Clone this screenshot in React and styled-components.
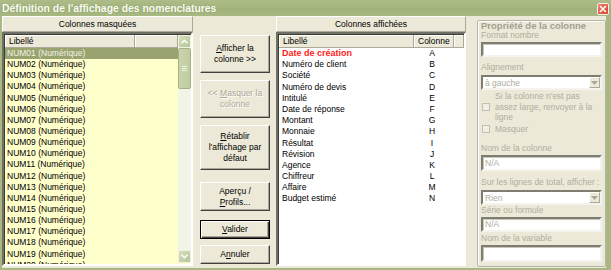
import React from 'react';
import styled, { createGlobalStyle } from 'styled-components';

const GlobalStyle = createGlobalStyle`
  html, body {
    margin: 0;
    padding: 0;
    background: #ece9d8;
    overflow: hidden;
  }
  body {
    font-family: 'Liberation Sans', Arial, sans-serif;
    font-size: 8.5px;
    color: #000;
  }
  * { box-sizing: border-box; }
`;

const hiddenCols = Array.from(
  { length: 20 },
  (_, i) => `NUM${String(i + 1).padStart(2, '0')} (Numérique)`
);

const shownCols = [
  ['Date de création', 'A'],
  ['Numéro de client', 'B'],
  ['Société', 'C'],
  ['Numéro de devis', 'D'],
  ['Intitulé', 'E'],
  ['Date de réponse', 'F'],
  ['Montant', 'G'],
  ['Monnaie', 'H'],
  ['Résultat', 'I'],
  ['Révision', 'J'],
  ['Agence', 'K'],
  ['Chiffreur', 'L'],
  ['Affaire', 'M'],
  ['Budget estimé', 'N'],
];

export default function App() {
  return (
    <>
      <GlobalStyle />
      <Window>
        <TitleBar>
          <span>Définition de l'affichage des nomenclatures</span>
          <CloseBox>
            <svg width='8' height='8' viewBox='0 0 8 8'>
              <path d='M1 1L7 7M7 1L1 7' stroke='#fff' strokeWidth='1.6' />
            </svg>
          </CloseBox>
        </TitleBar>

        <Frame>
          {/* Colonnes masquées */}
          <Pane $w={191} $ml={0}>
            <PaneHeader>Colonnes masquées</PaneHeader>
            <ListBox $bg='#ffffcc'>
              <ListContent>
                <HeaderRow>
                  <HeaderCell $w={130}>Libellé</HeaderCell>
                  <HeaderCell $grow>&nbsp;</HeaderCell>
                </HeaderRow>
                {hiddenCols.map((name, i) => (
                  <Row key={name} $selected={i === 0}>
                    {name}
                  </Row>
                ))}
              </ListContent>
              <ScrollBar>
                <ScrollArrow>
                  <svg width='7' height='5' viewBox='0 0 7 5'>
                    <path d='M0.5 4.2L3.5 1.2L6.5 4.2' stroke='#fff' strokeWidth='1.5' fill='none' />
                  </svg>
                </ScrollArrow>
                <Thumb>
                  <Grip />
                  <Grip />
                  <Grip />
                </Thumb>
                <Track />
                <ScrollArrow>
                  <svg width='7' height='5' viewBox='0 0 7 5'>
                    <path d='M0.5 0.8L3.5 3.8L6.5 0.8' stroke='#fff' strokeWidth='1.5' fill='none' />
                  </svg>
                </ScrollArrow>
              </ScrollBar>
            </ListBox>
          </Pane>

          {/* Boutons */}
          <ButtonColumn>
            <Button $h={38} $mt={0}>
              <u>A</u>fficher la<br />colonne &gt;&gt;
            </Button>
            <Button $h={38} $mt={7} disabled>
              &lt;&lt; <u>M</u>asquer la<br />colonne
            </Button>
            <Button $h={45} $mt={7}>
              <u>R</u>établir<br />l'affichage par<br />défaut
            </Button>
            <Button $h={29} $mt={12}>
              Aperçu /<br /><u>P</u>rofils...
            </Button>
            <Button $h={19} $mt={9} $default>
              <u>V</u>alider
            </Button>
            <Button $h={19} $mt={6}>
              A<u>n</u>nuler
            </Button>
          </ButtonColumn>

          {/* Colonnes affichées */}
          <Pane $w={190} $ml={6}>
            <PaneHeader>Colonnes affichées</PaneHeader>
            <ListBox $bg='#fff'>
              <ListContent>
                <HeaderRow>
                  <HeaderCell $w={135}>Libellé</HeaderCell>
                  <HeaderCell $w={40} $center>Colonne</HeaderCell>
                  <HeaderCell $grow>&nbsp;</HeaderCell>
                </HeaderRow>
                {shownCols.map(([label, letter], i) => (
                  <ShownRow key={label} $first={i === 0}>
                    <LabelCell>{label}</LabelCell>
                    <LetterCell>{letter}</LetterCell>
                  </ShownRow>
                ))}
              </ListContent>
            </ListBox>
          </Pane>

          {/* Propriété de la colonne */}
          <GroupBox>
            <GroupTitle>Propriété de la colonne</GroupTitle>
            <FieldLabel $mt={0}>Format nombre</FieldLabel>
            <TextBox $h={15} $mt={1} />
            <FieldLabel $mt={5}>Alignement</FieldLabel>
            <Select $mt={2}>
              <span>à gauche</span>
              <DropButton>
                <svg width='7' height='4' viewBox='0 0 7 4'>
                  <path d='M0 0H7L3.5 4Z' fill='#aca899' />
                </svg>
              </DropButton>
            </Select>
            <CheckRow $mt={1}>
              <CheckBox />
              <CheckText>
                Si la colonne n'est pas<br />assez large, renvoyer à la<br />ligne
              </CheckText>
            </CheckRow>
            <CheckRow $mt={1}>
              <CheckBox />
              <CheckText>Masquer</CheckText>
            </CheckRow>
            <FieldLabel $mt={9}>Nom de la colonne</FieldLabel>
            <TextBox $h={16} $mt={1}>N/A</TextBox>
            <FieldLabel $mt={6}>Sur les lignes de total, afficher :</FieldLabel>
            <Select $mt={2}>
              <span>Rien</span>
              <DropButton>
                <svg width='7' height='4' viewBox='0 0 7 4'>
                  <path d='M0 0H7L3.5 4Z' fill='#aca899' />
                </svg>
              </DropButton>
            </Select>
            <FieldLabel $mt={0}>Série ou formule</FieldLabel>
            <TextBox $h={15} $mt={1}>N/A</TextBox>
            <FieldLabel $mt={1}>Nom de la variable</FieldLabel>
            <TextBox $h={17} $mt={1} />
          </GroupBox>
        </Frame>
      </Window>
    </>
  );
}

// Styled components

const Window = styled.div`
  width: 611px;
  height: 270px;
  display: flex;
  flex-direction: column;
`;

const TitleBar = styled.div`
  height: 16px;
  display: flex;
  align-items: center;
  justify-content: space-between;
  padding: 0 2px 0 2px;
  background: linear-gradient(#adbc88, #a2b37a 60%, #a8b882);
  color: #fbfdf5;
  font-weight: bold;
  font-size: 10.4px;
  text-shadow: 0 0 1px #7f9058;
  white-space: nowrap;
`;

const CloseBox = styled.div`
  width: 12px;
  height: 12px;
  margin-top: 1px;
  display: flex;
  align-items: center;
  justify-content: center;
  background: linear-gradient(135deg, #ef7d6a, #d8402c);
  border: 1px solid #f4f0e8;
  border-radius: 2px;
`;

const Frame = styled.div`
  flex: 1;
  display: flex;
  align-items: flex-start;
  background: #ece9d8;
  border-left: 2px solid #a9b882;
  border-right: 5px solid #a9b882;
  border-bottom: 2px solid #a9b882;
`;

const Pane = styled.div`
  width: ${(p) => p.$w}px;
  margin-left: ${(p) => p.$ml}px;
  display: flex;
  flex-direction: column;
`;

const PaneHeader = styled.div`
  height: 16px;
  line-height: 14px;
  text-align: center;
  background: #ece9d8;
  border: 1px solid;
  border-color: #fff #aca899 #aca899 #fff;
`;

const ListBox = styled.div`
  height: 234px;
  display: flex;
  background: ${(p) => p.$bg};
  border: 2px solid;
  border-color: #6f6f64 #fff #fff #6f6f64;
  box-shadow: inset 1px 1px #3c3c36;
  padding: 1px 0 1px 1px;
  overflow: hidden;
`;

const ListContent = styled.div`
  flex: 1;
  min-width: 0;
  display: flex;
  flex-direction: column;
`;

const HeaderRow = styled.div`
  height: 13px;
  display: flex;
  flex-shrink: 0;
  background: #ece9d8;
`;

const HeaderCell = styled.div`
  width: ${(p) => (p.$w ? `${p.$w}px` : 'auto')};
  flex: ${(p) => (p.$grow ? 1 : 'none')};
  line-height: 12px;
  padding-left: 4px;
  text-align: ${(p) => (p.$center ? 'center' : 'left')};
  padding-right: ${(p) => (p.$center ? 4 : 0)}px;
  border-right: 1px solid #aca899;
  border-bottom: 1px solid #aca899;
  box-shadow: inset 1px 1px #fff;
`;

const Row = styled.div`
  height: 11.15px;
  line-height: 11.15px;
  padding-left: 2px;
  white-space: nowrap;
  flex-shrink: 0;
  background: ${(p) => (p.$selected ? '#98a370' : 'transparent')};
  color: ${(p) => (p.$selected ? '#f2f2e4' : '#000')};
`;

const ShownRow = styled.div`
  height: 11.2px;
  line-height: 11.2px;
  display: flex;
  flex-shrink: 0;
  color: ${(p) => (p.$first ? '#ff1a1a' : '#000')};
  font-weight: ${(p) => (p.$first ? 'bold' : 'normal')};
  font-size: ${(p) => (p.$first ? '9px' : '8.5px')};
`;

const LabelCell = styled.div`
  width: 135px;
  padding-left: 3px;
  white-space: nowrap;
`;

const LetterCell = styled.div`
  width: 36px;
  text-align: center;
  font-weight: normal;
  font-size: 8.5px;
  color: #000;
`;

const ScrollBar = styled.div`
  width: 13px;
  display: flex;
  flex-direction: column;
  background: #f3f4e8;
`;

const ScrollArrow = styled.div`
  height: 13px;
  display: flex;
  align-items: center;
  justify-content: center;
  background: linear-gradient(135deg, #d6dfbd, #b6c396);
  border: 1px solid #eef2e2;
  border-radius: 2px;
  flex-shrink: 0;
`;

const Thumb = styled.div`
  height: 41px;
  display: flex;
  flex-direction: column;
  align-items: center;
  justify-content: center;
  gap: 1px;
  background: linear-gradient(90deg, #cad4ad, #c1cca1);
  border: 1px solid #a4b283;
  border-radius: 2px;
`;

const Grip = styled.div`
  width: 5px;
  height: 1px;
  background: #eef2e2;
`;

const Track = styled.div`
  flex: 1;
`;

const ButtonColumn = styled.div`
  width: 70px;
  margin-left: 7px;
  padding-top: 19px;
  display: flex;
  flex-direction: column;
`;

const Button = styled.button`
  width: 70px;
  height: ${(p) => p.$h}px;
  margin-top: ${(p) => p.$mt}px;
  padding: 0;
  font-family: 'Liberation Sans', Arial, sans-serif;
  font-size: 8.5px;
  line-height: 11px;
  text-align: center;
  background: #ece9d8;
  color: #000;
  border: 1px solid;
  border-color: ${(p) => (p.$default ? '#000' : '#fff #404040 #404040 #fff')};
  box-shadow: ${(p) =>
    p.$default
      ? 'inset 1px 1px #fff, inset -1px -1px #404040, inset -2px -2px #aca899'
      : 'inset -1px -1px #aca899'};

  &:disabled {
    color: #aca899;
    text-shadow: 1px 1px #fff;
  }
  u {
    text-decoration-thickness: 1px;
  }
`;

const GroupBox = styled.div`
  width: 129px;
  height: 247px;
  margin-left: 11px;
  margin-top: 4px;
  padding: 0 3px;
  display: flex;
  flex-direction: column;
  border: 1px solid #b5b3a4;
  border-radius: 2px;
  box-shadow: inset 1px 1px #fff;
  color: #aca899;
`;

const GroupTitle = styled.div`
  height: 9px;
  line-height: 10px;
  font-size: 9.5px;
  font-weight: bold;
  color: #a3a091;
  white-space: nowrap;
`;

const FieldLabel = styled.div`
  height: 11px;
  line-height: 11px;
  margin-top: ${(p) => p.$mt}px;
  white-space: nowrap;
  color: #b0ad9e;
`;

const TextBox = styled.div`
  width: 121px;
  height: ${(p) => p.$h}px;
  margin-top: ${(p) => p.$mt}px;
  padding-left: 2px;
  line-height: ${(p) => p.$h - 4}px;
  background: #fff;
  border: 2px solid;
  border-color: #7f7d72 #f4f3ee #f4f3ee #7f7d72;
  box-shadow: inset 1px 1px #c9c7ba;
  color: #b0ad9e;
`;

const Select = styled.div`
  width: 121px;
  height: 15px;
  margin-top: ${(p) => p.$mt}px;
  padding-left: 2px;
  display: flex;
  align-items: center;
  justify-content: space-between;
  background: #fff;
  border: 2px solid;
  border-color: #7f7d72 #f4f3ee #f4f3ee #7f7d72;
  color: #b0ad9e;
`;

const DropButton = styled.div`
  width: 11px;
  height: 11px;
  display: flex;
  align-items: center;
  justify-content: center;
  background: #ece9d8;
  border: 1px solid;
  border-color: #fff #aca899 #aca899 #fff;
`;

const CheckRow = styled.div`
  margin-top: ${(p) => p.$mt}px;
  display: flex;
  align-items: center;
`;

const CheckBox = styled.div`
  width: 8px;
  height: 8px;
  margin-left: 1px;
  flex-shrink: 0;
  border: 1px solid #c2c0b2;
  background: #f1efe4;
`;

const CheckText = styled.div`
  margin-left: 5px;
  line-height: 10.5px;
  white-space: nowrap;
  color: #b0ad9e;
`;
